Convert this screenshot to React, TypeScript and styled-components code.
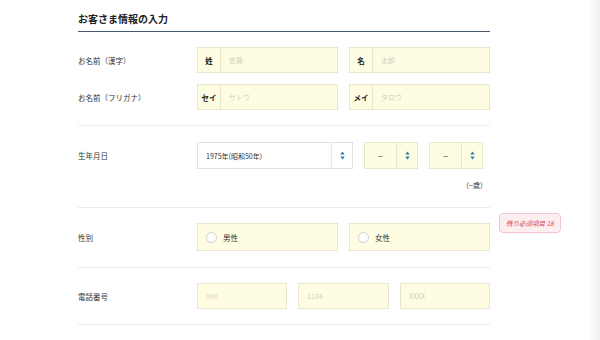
import React from "react";
import styled, { createGlobalStyle } from "styled-components";

const Global = createGlobalStyle`
  html, body { margin: 0; padding: 0; background: #fff; }
  body { font-family: "Noto Sans CJK JP", "Noto Sans", sans-serif; color: #222; }
  * { box-sizing: border-box; }
`;

const Page = styled.div`
  display: flex;
  width: 600px;
  height: 340px;
  overflow: hidden;
`;

const Main = styled.div`
  position: relative;
  flex: 1;
  padding-left: 78px;
`;

const Edge = styled.div`
  width: 10px;
  background: linear-gradient(to right, #fbfbfb, #f1f1f1);
`;

const Form = styled.div`
  width: 412px;
`;

const Title = styled.h2`
  margin: 0;
  padding: 12px 0 5px;
  font-size: 10px;
  line-height: 14px;
  font-weight: 700;
  color: #222;
  border-bottom: 1px solid #4a5a70;
`;

const Section = styled.div<{ $top: number; $bottom: number }>`
  display: flex;
  flex-direction: column;
  gap: 11px;
  padding: ${(p) => p.$top}px 0 ${(p) => p.$bottom}px;
  border-bottom: 1px solid #ebebeb;
`;

const Row = styled.div<{ $h: number }>`
  display: grid;
  grid-template-columns: 119px 293px;
  align-items: center;
  height: ${(p) => p.$h}px;
`;

const Label = styled.div`
  font-size: 7.5px;
  color: #333;
`;

const Fields = styled.div<{ $cols: string; $gap: number }>`
  display: grid;
  grid-template-columns: ${(p) => p.$cols};
  column-gap: ${(p) => p.$gap}px;
  height: 100%;
`;

const YellowBox = styled.div`
  display: flex;
  align-items: center;
  height: 100%;
  background: #fefde2;
  border: 1px solid #e9e6cc;
`;

const Prefix = styled.div`
  width: 23px;
  height: 100%;
  display: flex;
  align-items: center;
  justify-content: center;
  border-right: 1px solid #e9e6cc;
  font-size: 7.5px;
  font-weight: 700;
  color: #222;
`;

const Placeholder = styled.span`
  padding-left: 8px;
  font-size: 7px;
  color: #d2d0be;
`;

const SelectBox = styled.div<{ $yellow?: boolean }>`
  display: flex;
  align-items: center;
  height: 100%;
  background: ${(p) => (p.$yellow ? "#fefde2" : "#fff")};
  border: 1px solid ${(p) => (p.$yellow ? "#e9e6cc" : "#e2e2e2")};
`;

const SelectText = styled.span<{ $center?: boolean }>`
  flex: 1;
  font-size: ${(p) => (p.$center ? "8px" : "7px")};
  font-family: ${(p) =>
    p.$center ? '"Liberation Sans", sans-serif' : "inherit"};
  color: #333;
  padding-left: ${(p) => (p.$center ? "0" : "8px")};
  text-align: ${(p) => (p.$center ? "center" : "left")};
`;

const ArrowCell = styled.div<{ $yellow?: boolean }>`
  width: 21px;
  height: 100%;
  display: flex;
  align-items: center;
  justify-content: center;
  border-left: 1px solid ${(p) => (p.$yellow ? "#e9e6cc" : "#e8e8e8")};
`;

const AgeLine = styled.div`
  display: flex;
  justify-content: flex-end;
  padding-right: 3px;
  font-size: 7px;
  line-height: 12px;
  color: #333;
  margin-top: -1px;
`;

const Dash = styled.span`
  font-family: "Liberation Sans", sans-serif;
`;

const RadioBox = styled(YellowBox)`
  padding-left: 8px;
  gap: 6px;
`;

const RadioCircle = styled.span`
  width: 11px;
  height: 11px;
  border-radius: 50%;
  background: #fff;
  border: 1px solid #cfcfcf;
`;

const RadioText = styled.span`
  font-size: 7.5px;
  color: #333;
`;

const Badge = styled.div`
  position: absolute;
  left: 499px;
  top: 213px;
  height: 20px;
  padding: 0 6px;
  display: flex;
  align-items: center;
  background: #fdeef0;
  border: 1px solid #f1c5cb;
  border-radius: 4px;
  font-size: 6.5px;
  font-style: italic;
  color: #d2404f;
  white-space: nowrap;
`;

const Arrows = () => (
  <svg width="5" height="9" viewBox="0 0 5 9">
    <path d="M2.5 0.5 L4.7 3.6 L0.3 3.6 Z" fill="#2f78b4" />
    <path d="M2.5 8.5 L4.7 5.4 L0.3 5.4 Z" fill="#2f78b4" />
  </svg>
);

const NameField = ({ prefix, ph }: { prefix: string; ph: string }) => (
  <YellowBox>
    <Prefix>{prefix}</Prefix>
    <Placeholder>{ph}</Placeholder>
  </YellowBox>
);

export default function App() {
  return (
    <Page>
      <Global />
      <Main>
        <Form>
          <Title>お客さま情報の入力</Title>

          <Section $top={15} $bottom={15}>
            <Row $h={26}>
              <Label>お名前（漢字）</Label>
              <Fields $cols="141px 141px" $gap={11}>
                <NameField prefix="姓" ph="佐藤" />
                <NameField prefix="名" ph="太郎" />
              </Fields>
            </Row>
            <Row $h={26}>
              <Label>お名前（フリガナ）</Label>
              <Fields $cols="141px 141px" $gap={11}>
                <NameField prefix="セイ" ph="サトウ" />
                <NameField prefix="メイ" ph="タロウ" />
              </Fields>
            </Row>
          </Section>

          <Section $top={16} $bottom={16}>
            <Row $h={27}>
              <Label>生年月日</Label>
              <Fields $cols="156px 54px 54px" $gap={11}>
                <SelectBox>
                  <SelectText>1975年(昭和50年)</SelectText>
                  <ArrowCell>
                    <Arrows />
                  </ArrowCell>
                </SelectBox>
                <SelectBox $yellow>
                  <SelectText $center>–</SelectText>
                  <ArrowCell $yellow>
                    <Arrows />
                  </ArrowCell>
                </SelectBox>
                <SelectBox $yellow>
                  <SelectText $center>–</SelectText>
                  <ArrowCell $yellow>
                    <Arrows />
                  </ArrowCell>
                </SelectBox>
              </Fields>
            </Row>
            <AgeLine>
              （<Dash>–</Dash>歳）
            </AgeLine>
          </Section>

          <Section $top={15} $bottom={16}>
            <Row $h={28}>
              <Label>性別</Label>
              <Fields $cols="141px 141px" $gap={11}>
                <RadioBox>
                  <RadioCircle />
                  <RadioText>男性</RadioText>
                </RadioBox>
                <RadioBox>
                  <RadioCircle />
                  <RadioText>女性</RadioText>
                </RadioBox>
              </Fields>
            </Row>
          </Section>

          <Section $top={15} $bottom={15}>
            <Row $h={26}>
              <Label>電話番号</Label>
              <Fields $cols="90px 91px 90px" $gap={11}>
                <YellowBox>
                  <Placeholder>090</Placeholder>
                </YellowBox>
                <YellowBox>
                  <Placeholder>1234</Placeholder>
                </YellowBox>
                <YellowBox>
                  <Placeholder>XXXX</Placeholder>
                </YellowBox>
              </Fields>
            </Row>
          </Section>
        </Form>
        <Badge>残り必須項目 18</Badge>
      </Main>
      <Edge />
    </Page>
  );
}
